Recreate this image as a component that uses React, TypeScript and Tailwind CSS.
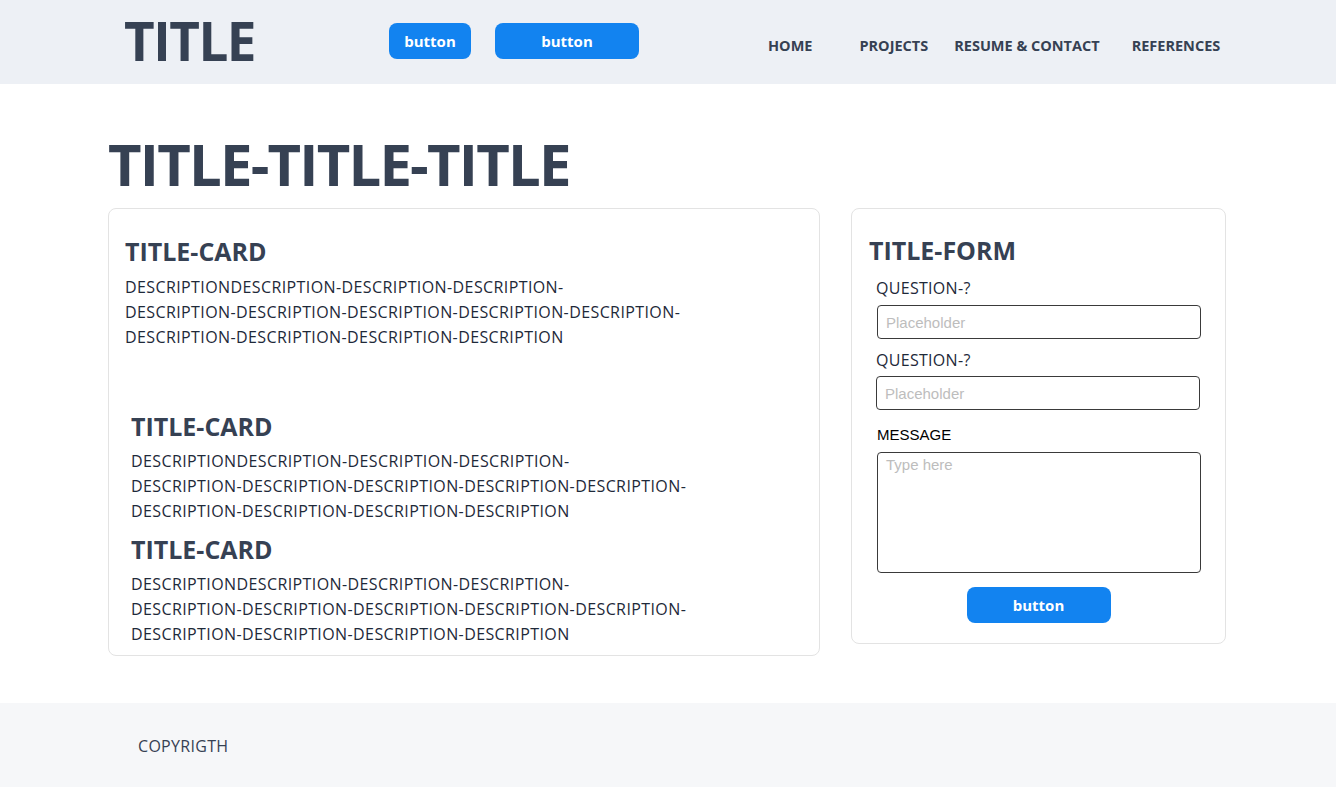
const open = { fontFamily: '"Open Sans", "Noto Sans", sans-serif' };
const arial = { fontFamily: '"Liberation Sans", Arial, sans-serif' };

const DESC = [
  "DESCRIPTIONDESCRIPTION-DESCRIPTION-DESCRIPTION-",
  "DESCRIPTION-DESCRIPTION-DESCRIPTION-DESCRIPTION-DESCRIPTION-",
  "DESCRIPTION-DESCRIPTION-DESCRIPTION-DESCRIPTION",
];

function CardBlock({ className = "", descGap = "mt-[8px]" }: { className?: string; descGap?: string }) {
  return (
    <div className={className}>
      <h3 className="text-[25px] font-bold leading-8 text-gray-700">TITLE-CARD</h3>
      <p className={`${descGap} text-base leading-[25px] tracking-[0.4px] text-gray-800`}>
        {DESC.map((line) => (
          <span key={line} className="block">
            {line}
          </span>
        ))}
      </p>
    </div>
  );
}

function Button({ wide = false }: { wide?: boolean }) {
  return (
    <button
      className={`h-9 rounded-lg bg-[#1283f0] text-[15px] font-bold text-white ${wide ? "w-[144px]" : "w-[82px]"}`}
    >
      button
    </button>
  );
}

export default function App() {
  return (
    <div className="flex min-h-screen flex-col bg-white" style={open}>
      {/* Header */}
      <header className="flex h-[84px] items-center bg-[#edf0f5] pl-[124px]">
        <h1 className="-mt-[3px] w-[128px] shrink-0 whitespace-nowrap text-[53px] font-bold leading-none tracking-[-1.5px] text-gray-700">
          TITLE
        </h1>
        <div className="-mt-[2px] ml-[137px] flex gap-[24px]">
          <Button />
          <Button wide />
        </div>
        <nav className="ml-[129px] mt-[7px] flex text-[14.5px] font-bold text-gray-700">
          <a>HOME</a>
          <a className="ml-[47px]">PROJECTS</a>
          <a className="ml-[26px]">RESUME &amp; CONTACT</a>
          <a className="ml-[32px]">REFERENCES</a>
        </nav>
      </header>

      {/* Main */}
      <main className="px-[108px] pt-[51px] pb-[47px]">
        <h2 className="text-[58px] font-bold leading-none tracking-[-1.8px] text-gray-700">TITLE-TITLE-TITLE</h2>
        <div className="mt-[15px] flex items-start gap-[31px]">
          {/* Cards */}
          <section className="w-[712px] rounded-lg border border-[#e3e3e3] px-4 pt-[26px] pb-[8px]">
            <CardBlock descGap="mt-[8px]" />
            <CardBlock className="ml-[6px] mt-[60px]" descGap="mt-[7px]" />
            <CardBlock className="ml-[6px] mt-[9px]" descGap="mt-[7px]" />
          </section>

          {/* Form */}
          <section className="w-[375px] rounded-lg border border-[#e3e3e3] pl-[17px] pr-[24px] pt-[25px] pb-[20px]">
            <h3 className="text-[25px] font-bold leading-8 text-gray-700">TITLE-FORM</h3>
            <form className="pl-[7px]">
              <label className="mt-[10px] block text-base leading-6 tracking-[0.3px] text-gray-800">QUESTION-?</label>
              <input
                placeholder="Placeholder"
                className="mt-[5px] ml-px block h-[34px] w-[324px] rounded border border-[#3a3a3a] px-2 text-[15px] outline-none placeholder:text-[#bdbdbd]"
                style={arial}
              />
              <label className="mt-[9px] block text-base leading-6 tracking-[0.3px] text-gray-800">QUESTION-?</label>
              <input
                placeholder="Placeholder"
                className="mt-[4px] block h-[34px] w-[324px] rounded border border-[#3a3a3a] px-2 text-[15px] outline-none placeholder:text-[#bdbdbd]"
                style={arial}
              />
              <label className="mt-[15px] ml-px block text-[15px] leading-5 text-black" style={arial}>
                MESSAGE
              </label>
              <textarea
                placeholder="Type here"
                className="mt-[7px] ml-px block h-[121px] w-[324px] resize-none rounded border border-[#3a3a3a] px-2 py-px text-[15px] outline-none placeholder:text-[#bdbdbd]"
                style={arial}
              />
              <div className="mt-[14px] flex justify-center">
                <Button wide />
              </div>
            </form>
          </section>
        </div>
      </main>

      {/* Footer */}
      <footer className="flex h-[84px] items-center bg-[#f6f7f9] pl-[138px]">
        <span className="mt-[2px] text-base tracking-[0.3px] text-gray-700">COPYRIGTH</span>
      </footer>
    </div>
  );
}
